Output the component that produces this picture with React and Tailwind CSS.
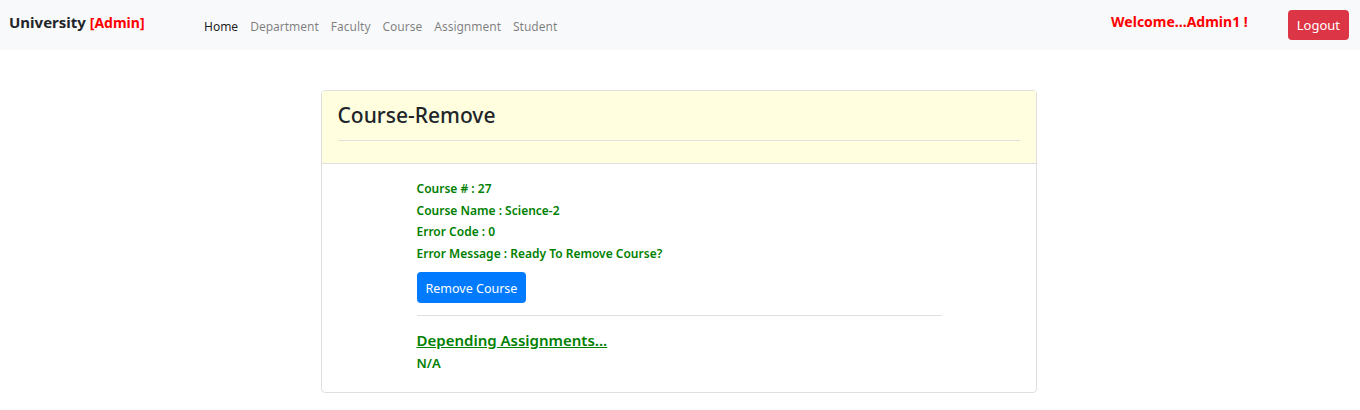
export default function App() {
  const font = { fontFamily: '"Noto Sans", "Open Sans", sans-serif' };
  return (
    <div className="min-h-[410px] bg-white text-[#212529]" style={font}>
      <nav className="h-[50px] bg-[#f8f9fa] flex items-center pl-[9px] pr-[11px]">
        <div className="text-[15px] font-bold text-[#212529] w-[195px] -mt-[5px]">
          University <span className="text-[14px] text-[#ff0000]">[Admin]</span>
        </div>
        <div className="flex gap-[12px] text-[12px] text-[rgba(0,0,0,0.5)] mt-[3px]">
          <span className="text-[rgba(0,0,0,0.9)]">Home</span>
          <span>Department</span>
          <span>Faculty</span>
          <span>Course</span>
          <span>Assignment</span>
          <span>Student</span>
        </div>
        <div className="ml-auto flex items-center">
          <span className="text-[14px] font-bold text-[#ff0000] mr-[40px] -mt-[8px]">Welcome...Admin1 !</span>
          <button className="h-[30px] px-[9px] pt-[2px] rounded-[4px] bg-[#dc3545] text-white text-[13px]">Logout</button>
        </div>
      </nav>
      <div className="flex justify-center pt-[40px] pr-[3px]">
        <div className="w-[716px] border border-[#dfdfdf] rounded-[4px] overflow-hidden">
          <div className="bg-[#ffffe0] border-b border-[#dfdfdf] px-[16px] pt-[10px] pb-[22px]">
            <h3 className="text-[21px] font-medium leading-[28px] text-[#212529] pb-[11px] border-b border-[#dfdfdf]">Course-Remove</h3>
          </div>
          <div className="pl-[95px] pr-[94px] pt-[14px] pb-[19px] text-[12px] font-semibold text-[#008000]">
            <div className="leading-[21.5px]">Course # : 27</div>
            <div className="leading-[21.5px]">Course Name : Science-2</div>
            <div className="leading-[21.5px]">Error Code : 0</div>
            <div className="leading-[21.5px]">Error Message : Ready To Remove Course?</div>
            <button className="mt-[8px] h-[31px] px-[9px] pt-[3px] rounded-[4px] bg-[#007bff] text-white text-[12.5px] font-normal">Remove Course</button>
            <div className="mt-[12px] border-t border-[#dfdfdf]" />
            <div className="mt-[13px] text-[15px] font-semibold underline leading-[22px]">Depending Assignments...</div>
            <div className="mt-[2px] text-[13px] leading-[20px]">N/A</div>
          </div>
        </div>
      </div>
    </div>
  );
}
